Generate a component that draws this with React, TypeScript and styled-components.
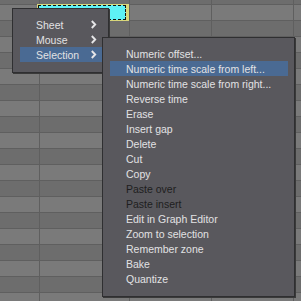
import styled, { createGlobalStyle } from "styled-components";

const GlobalStyle = createGlobalStyle`
  html, body {
    margin: 0;
    padding: 0;
    background: #747474;
  }
`;

const Page = styled.div`
  position: relative;
  width: 301px;
  height: 301px;
  overflow: hidden;
  background: #747474;
  font-family: "Liberation Sans", Arial, sans-serif;
`;

const Sheet = styled.div`
  display: flex;
  flex-direction: column;
  margin-top: -11px;
`;

const Row = styled.div<{ $odd: boolean }>`
  display: flex;
  height: 15px;
  border-bottom: 1px solid #5f5f5f;
  background: ${p => (p.$odd ? "#6d6d6d" : "#7a7a7a")};
`;

const Cell = styled.div<{ $w: number }>`
  flex: 0 0 ${p => p.$w}px;
  box-sizing: border-box;
  border-right: 1px solid #5f5f5f;
  position: relative;
`;

const SelectedCell = styled.div`
  position: absolute;
  left: -3px;
  right: 0;
  top: -1px;
  bottom: -1px;
  background: #d9d77a;
  padding: 1px 3px 1px 1px;
  display: flex;
`;

const CellFill = styled.div`
  flex: 1;
  background: #5ef2f6;
  border: 1px dashed #111;
`;

const Menu = styled.div<{ $x: number; $y: number; $w: number }>`
  position: absolute;
  left: ${p => p.$x}px;
  top: ${p => p.$y}px;
  width: ${p => p.$w}px;
  box-sizing: border-box;
  background: #59585d;
  border: 1px solid #2f2f31;
  box-shadow: 1px 1px 0 #3a3a3a;
  padding: 8px 6px 10px 7px;
  display: flex;
  flex-direction: column;
`;

const Item = styled.div<{ $active?: boolean; $disabled?: boolean }>`
  height: 15px;
  display: flex;
  align-items: center;
  justify-content: space-between;
  padding: 0 5px 0 16px;
  font-size: 10.5px;
  white-space: nowrap;
  color: ${p => (p.$disabled ? "#1e1e20" : "#e2e2e4")};
  background: ${p => (p.$active ? "#4a6a93" : "transparent")};
`;

const Arrow = () => (
  <svg width="7" height="9" viewBox="0 0 7 9">
    <path d="M1.8 1 L5.2 4.5 L1.8 8" fill="none" stroke="#e6e6e8" strokeWidth="1.9" />
  </svg>
);

const cols = [40, 90, 82, 82, 20];

const subItems: { label: string; active?: boolean; disabled?: boolean }[] = [
  { label: "Numeric offset..." },
  { label: "Numeric time scale from left...", active: true },
  { label: "Numeric time scale from right..." },
  { label: "Reverse time" },
  { label: "Erase" },
  { label: "Insert gap" },
  { label: "Delete" },
  { label: "Cut" },
  { label: "Copy" },
  { label: "Paste over", disabled: true },
  { label: "Paste insert", disabled: true },
  { label: "Edit in Graph Editor" },
  { label: "Zoom to selection" },
  { label: "Remember zone" },
  { label: "Bake" },
  { label: "Quantize" },
];

export default function App() {
  const rows = Array.from({ length: 21 }, (_, i) => i);
  return (
    <Page>
      <GlobalStyle />
      <Sheet>
        {rows.map(r => (
          <Row key={r} $odd={r % 2 === 0}>
            {cols.map((w, c) => (
              <Cell key={c} $w={w}>
                {r === 1 && c === 1 && (
                  <SelectedCell>
                    <CellFill />
                  </SelectedCell>
                )}
              </Cell>
            ))}
          </Row>
        ))}
      </Sheet>

      <Menu $x={12} $y={8} $w={97}>
        <Item>
          Sheet <Arrow />
        </Item>
        <Item>
          Mouse <Arrow />
        </Item>
        <Item $active>
          Selection <Arrow />
        </Item>
      </Menu>

      <Menu $x={102} $y={37} $w={193}>
        {subItems.map(it => (
          <Item key={it.label} $active={it.active} $disabled={it.disabled}>
            {it.label}
          </Item>
        ))}
      </Menu>
    </Page>
  );
}
